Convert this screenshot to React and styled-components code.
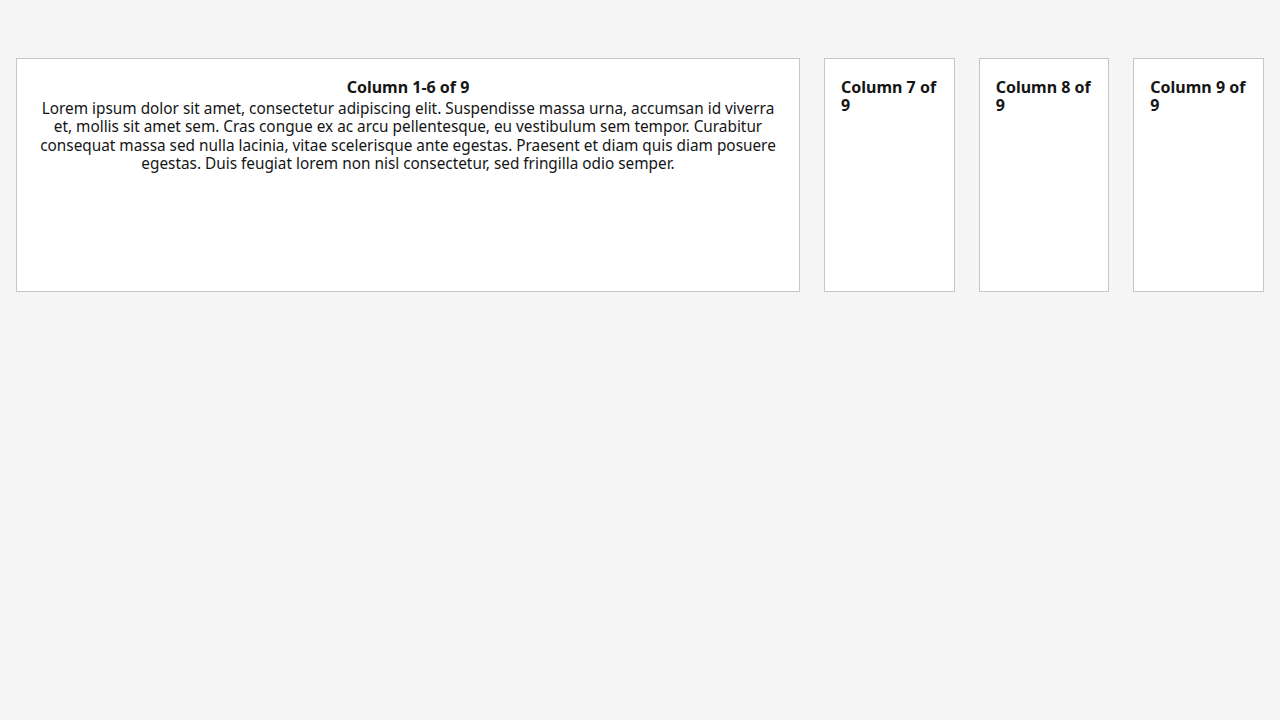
import React from 'react'
import styled, { createGlobalStyle } from 'styled-components';

const GlobalStyle = createGlobalStyle`
body{
    margin : 0;
    background-color : #f5f5f5;
    font-family : 'Noto Sans', 'Open Sans', sans-serif;
    color : #151515;
}
`;

const columns = [
    { span: 6, title: 'Column 1-6 of 9', centered: true, text: 'Lorem ipsum dolor sit amet, consectetur adipiscing elit. Suspendisse massa urna, accumsan id viverra et, mollis sit amet sem. Cras congue ex ac arcu pellentesque, eu vestibulum sem tempor. Curabitur consequat massa sed nulla lacinia, vitae scelerisque ante egestas. Praesent et diam quis diam posuere egestas. Duis feugiat lorem non nisl consectetur, sed fringilla odio semper.' },
    { span: 1, title: 'Column 7 of 9' },
    { span: 1, title: 'Column 8 of 9' },
    { span: 1, title: 'Column 9 of 9' },
];

function App() {
    return (
        <>
            <GlobalStyle />
            <Page>
                <Row>
                    {columns.map((col) => (
                        <Card key={col.title} $centered={col.centered}>
                            <Title>{col.title}</Title>
                            {col.text && <Body>{col.text}</Body>}
                        </Card>
                    ))}
                </Row>
            </Page>
        </>
    );
}

const Page = styled.div`
padding : 58px 16px 16px;
`;

// first card takes 6 shares of the row, the others 1 each
const Row = styled.div`
display : grid;
grid-template-columns : minmax(0, 6fr) repeat(3, minmax(0, 1fr));
gap : 24px;
`;

const Card = styled.div`
min-width : 0;
height : 234px;
box-sizing : border-box;
background-color : #fff;
border : 1px solid #c7c7c7;
padding : 19px 16px 16px;
text-align : ${(p) => (p.$centered ? 'center' : 'left')};
`;

const Title = styled.h3`
margin : 0 0 3px;
font-size : 16px;
font-weight : 700;
line-height : 18px;
`;

const Body = styled.p`
margin : 0;
font-size : 15.35px;
line-height : 18.3px;
`;

export default App;
